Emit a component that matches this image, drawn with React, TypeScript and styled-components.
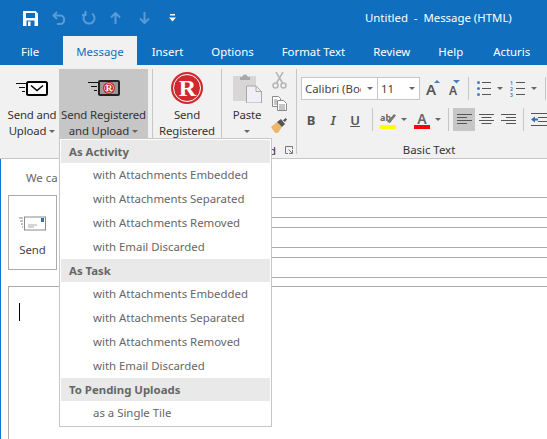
import React from 'react'
import styled, { createGlobalStyle } from 'styled-components'

const BLUE = '#106ebe'
const GREY_ICON = '#666'

const GlobalStyle = createGlobalStyle`
  html, body {
    margin: 0;
    padding: 0;
    background: #fff;
    font-family: "Noto Sans", "Open Sans", sans-serif;
    font-size: 11.4px;
  }
`

const Window = styled.div`
  position: relative;
  width: 547px;
  height: 439px;
  overflow: hidden;
  display: flex;
  flex-direction: column;
  background: #fff;
`

const TitleBar = styled.div`
  height: 36px;
  background: ${BLUE};
  display: flex;
  align-items: center;
`

const QuickButton = styled.span<{ $left: number; $w: number }>`
  display: flex;
  justify-content: center;
  margin-left: ${p => p.$left}px;
  width: ${p => p.$w}px;
`

const Title = styled.div`
  margin: -2px 0 0 189px;
  color: #fff;
  white-space: pre;
`

const Tabs = styled.div`
  height: 29px;
  background: ${BLUE};
  display: flex;
  padding-left: 7px;
`

const Tab = styled.div<{ $active?: boolean; $left?: number }>`
  display: flex;
  align-items: center;
  height: 29px;
  padding: 1px ${p => (p.$active ? 13 : 14)}px 0;
  box-sizing: border-box;
  white-space: nowrap;
  margin-left: ${p => p.$left ?? 0}px;
  color: ${p => (p.$active ? BLUE : '#fff')};
  background: ${p => (p.$active ? '#f1f1f1' : 'transparent')};
`

const Ribbon = styled.div`
  height: 89px;
  padding-top: 4px;
  background: #f1f1f1;
  border-bottom: 1px solid #c6c6c6;
  display: flex;
  color: #333;
  overflow: hidden;
`

const LargeButton = styled.div<{ $w: number; $active?: boolean; $pad?: number }>`
  width: ${p => p.$w}px;
  height: 71px;
  box-sizing: border-box;
  padding-left: ${p => p.$pad ?? 0}px;
  flex: none;
  background: ${p => (p.$active ? '#c6c6c6' : 'transparent')};
  display: flex;
  flex-direction: column;
  align-items: center;
`

const LargeIcon = styled.div`
  height: 38px;
  display: flex;
  align-items: center;
  justify-content: center;
`

const LargeLabel = styled.div`
  line-height: 16px;
  text-align: center;
  white-space: nowrap;
  letter-spacing: -0.15px;
`

const Caret = styled.span<{ $left?: number }>`
  display: inline-block;
  width: 0;
  height: 0;
  margin-left: ${p => p.$left ?? 3}px;
  vertical-align: middle;
  border-left: 3px solid transparent;
  border-right: 3px solid transparent;
  border-top: 3px solid ${GREY_ICON};
`

const GroupSep = styled.div<{ $left?: number }>`
  width: 1px;
  height: 85px;
  flex: none;
  margin-left: ${p => p.$left ?? 0}px;
  background: #c6c6c6;
`

const Group = styled.div<{ $w: number }>`
  width: ${p => p.$w}px;
  flex: none;
  display: flex;
  flex-direction: column;
`

const GroupTop = styled.div`
  flex: 1;
  display: flex;
`

const GroupFooter = styled.div`
  height: 16px;
  display: flex;
  align-items: center;
  justify-content: flex-end;
  padding-right: 3px;
  color: #333;
`

const Launcher = styled.span`
  display: flex;
  margin-left: 9px;
`

const ToolColumn = styled.div`
  width: 14px;
  display: flex;
  flex-direction: column;
  align-items: center;
  padding-top: 3px;
  gap: 7px;
`

const FontGroup = styled.div`
  width: 264px;
  flex: none;
  display: flex;
  flex-direction: column;
`

const FontRow = styled.div<{ $pad: number; $top: number }>`
  display: flex;
  align-items: center;
  height: 23px;
  padding-left: ${p => p.$pad}px;
  margin-top: ${p => p.$top}px;
`

const Combo = styled.div<{ $w: number }>`
  width: ${p => p.$w}px;
  height: 23px;
  box-sizing: border-box;
  flex: none;
  background: #fff;
  border: 1px solid #c6c6c6;
  display: flex;
  align-items: center;
  padding: 0 4px 0 3px;
  margin-right: -1px;
`

const ComboText = styled.span<{ $w: number }>`
  width: ${p => p.$w}px;
  overflow: hidden;
  white-space: nowrap;
  color: #444;
`

const Tool = styled.div<{ $w: number; $active?: boolean; $left?: number }>`
  width: ${p => p.$w}px;
  height: 23px;
  flex: none;
  margin-left: ${p => p.$left ?? 0}px;
  display: flex;
  align-items: center;
  justify-content: center;
  background: ${p => (p.$active ? '#c6c6c6' : 'transparent')};
`

const RowSep = styled.div<{ $left: number }>`
  width: 1px;
  height: 23px;
  flex: none;
  margin-left: ${p => p.$left}px;
  background: #c6c6c6;
`

const Format = styled.span<{ $b?: boolean; $i?: boolean; $u?: boolean }>`
  font-size: 13px;
  color: #555;
  font-weight: ${p => (p.$b ? 700 : 600)};
  font-style: ${p => (p.$i ? 'italic' : 'normal')};
  text-decoration: ${p => (p.$u ? 'underline' : 'none')};
`

const FontFooter = styled.div`
  margin-top: auto;
  height: 16px;
  line-height: 16px;
  text-align: center;
  color: #333;
`

const Body = styled.div`
  flex: 1;
  min-height: 0;
  display: flex;
  flex-direction: column;
  border-left: 1px solid #0f78d4;
`

const InfoBar = styled.div`
  height: 36px;
  display: flex;
  align-items: center;
  padding-left: 25px;
  color: #666;
`

const Compose = styled.div`
  height: 91px;
  display: flex;
  padding-left: 7px;
`

const SendButton = styled.div`
  width: 49px;
  height: 75px;
  box-sizing: border-box;
  border: 1px solid #ababab;
  display: flex;
  flex-direction: column;
  align-items: center;
  color: #444;
`

const SendIcon = styled.div`
  height: 35px;
  display: flex;
  align-items: flex-end;
`

const SendLabel = styled.div`
  line-height: 18px;
  margin-top: 10px;
`

const Fields = styled.div`
  flex: 1;
  margin-left: 5px;
  padding-top: 2px;
  display: flex;
  flex-direction: column;
  gap: 9px;
`

const Field = styled.div`
  height: 19px;
  border-top: 1px solid #ababab;
  border-bottom: 1px solid #ababab;
`

const Editor = styled.div`
  flex: 1;
  margin: 0 -2px -2px 7px;
  border: 1px solid #ababab;
  padding: 16px 10px;
`

const Cursor = styled.div`
  width: 1px;
  height: 18px;
  background: #000;
`

const Menu = styled.div`
  position: absolute;
  left: 59px;
  top: 138px;
  width: 213px;
  height: 289px;
  box-sizing: border-box;
  padding: 1px;
  background: #fff;
  border: 1px solid #c6c6c6;
`

const MenuHeader = styled.div`
  height: 23px;
  box-sizing: border-box;
  padding: 0 0 1px 8px;
  display: flex;
  align-items: center;
  background: #e9e9e9;
  color: #666;
  font-weight: 700;
`

const MenuItem = styled.div`
  height: 24px;
  box-sizing: border-box;
  padding: 0 0 2px 32px;
  display: flex;
  align-items: center;
  color: #666;
`

const Lines = () => (
  <g stroke="#111" strokeWidth="1">
    <path d="M0 2.500h10M3 6.500h6M6 10.500h3" />
  </g>
)

const SaveIcon = () => (
  <svg width="15" height="15" viewBox="0 0 15 15">
    <path d="M0 0h12.500L15 2.500V15H0z" fill="#fff" />
    <rect x="3" y="2" width="9" height="5" fill={BLUE} />
    <rect x="3.500" y="9.500" width="8" height="5.500" fill={BLUE} />
    <rect x="5" y="10.500" width="2.500" height="4.500" fill="#fff" />
  </svg>
)

const UndoIcon = () => (
  <svg width="15" height="14" viewBox="0 0 15 14" fill="none" stroke="#5b9bd5" strokeWidth="2">
    <path d="M5 1 1.500 4.500 5 8" />
    <path d="M2 4.500h6.500a4.300 4.300 0 0 1 0 8.500H5" />
  </svg>
)

const RedoIcon = () => (
  <svg width="14" height="14" viewBox="0 0 14 14" fill="none" stroke="#5b9bd5" strokeWidth="2">
    <path d="M4 2.500a5.500 5.500 0 1 0 6 0" />
    <path d="M3.500 0v4h-3.500" />
  </svg>
)

const ArrowIcon = ({ down }: { down?: boolean }) => (
  <svg width="11" height="12" viewBox="0 0 11 12" fill="none" stroke="#5b9bd5" strokeWidth="2">
    <g transform={down ? 'rotate(180 5.500 6)' : undefined}>
      <path d="M1 5.500 5.500 1 10 5.500M5.500 1v11" />
    </g>
  </svg>
)

const CustomizeIcon = () => (
  <svg width="7" height="8" viewBox="0 0 7 8">
    <path d="M1 0h5v1.500H1z" fill="#fff" />
    <path d="M0 3.500h7L3.500 7.500z" fill="#fff" />
  </svg>
)

const UploadIcon = () => (
  <svg width="32" height="15" viewBox="0 0 32 15">
    <Lines />
    <rect x="11" y="1" width="20" height="13" rx="1.500" fill="#fff" stroke="#000" strokeWidth="2" />
    <path d="M15 4.500 21 9.500 27 4.500" fill="none" stroke="#000" strokeWidth="1.500" />
  </svg>
)

const RegisteredUploadIcon = () => (
  <svg width="32" height="16" viewBox="0 0 32 16">
    <Lines />
    <rect x="11" y="1" width="20" height="14" rx="1" fill="#999" stroke="#222" strokeWidth="2" />
    <circle cx="21" cy="8" r="6" fill="#c8262c" />
    <circle cx="21" cy="8" r="4.500" fill="none" stroke="#fff" strokeWidth="0.600" />
    <text x="21" y="11" fontSize="9" fontWeight="700" textAnchor="middle" fill="#fff" fontFamily="Liberation Serif, serif">R</text>
  </svg>
)

const RegisteredIcon = () => (
  <svg width="32" height="32" viewBox="0 0 32 32">
    <circle cx="16" cy="16" r="16" fill="#cf2a30" />
    <circle cx="16" cy="16" r="13.500" fill="none" stroke="#fff" strokeWidth="1" />
    <text x="16.500" y="24" fontSize="24" fontWeight="700" textAnchor="middle" fill="#fff" fontFamily="Liberation Serif, serif">R</text>
  </svg>
)

const PasteIcon = () => (
  <svg width="29" height="30" viewBox="0 0 29 30">
    <rect x="0" y="3" width="23" height="25" rx="1" fill="#d8d6d7" />
    <path d="M7 4h2.500a2.500 2.500 0 0 1 5 0H17v3H7z" fill="#a9a9a9" />
    <path d="M13.500 13H23l5.500 5.500V30h-15z" fill="#f0eff5" stroke="#a9a9a9" />
    <path d="M23 13v5.500h5.500" fill="none" stroke="#a9a9a9" />
  </svg>
)

const ScissorsIcon = () => (
  <svg width="15" height="17" viewBox="0 0 15 17" fill="none" stroke="#b5b5b5" strokeWidth="1.500">
    <circle cx="3.500" cy="13.500" r="2.500" />
    <circle cx="11.500" cy="13.500" r="2.500" />
    <path d="M4.500 11 11 0M10.500 11 4 0" />
  </svg>
)

const CopyIcon = () => (
  <svg width="15" height="15" viewBox="0 0 15 15" fill="#fff" stroke="#8a8a8a">
    <path d="M.5.500h6l2 2v8h-8z" />
    <path d="M5.500 4.500h6l3 3v7h-9z" />
    <path d="M7 9h6M7 11h6M7 13h6M2 4h3M2 6h3M2 8h3" />
  </svg>
)

const BrushIcon = () => (
  <svg width="16" height="15" viewBox="0 0 16 15">
    <path d="M0 9 6 4l5 5-4 6H4z" fill="#edb668" />
    <path d="M6 4l4-3 4 5-3 3z" fill="#555" />
    <path d="M12 2.500 14.500 0 16 1.500 14 4z" fill="#555" />
  </svg>
)

const LauncherIcon = () => (
  <svg width="8" height="8" viewBox="0 0 8 8" fill="none" stroke="#777">
    <path d="M7.500 3V.500H.500v7H3" />
    <path d="M3.500 3.500 7 7M7.500 4v3.500H4" />
  </svg>
)

const GrowIcon = ({ size, x, caret }: { size: number; x: number; caret: string }) => (
  <svg width="16" height="20" viewBox="0 0 16 20">
    <text x={x} y="15.500" fontSize={size} fontWeight="600" fill="#555" fontFamily="Noto Sans, sans-serif">A</text>
    <path d={caret} fill="#4a7ebb" />
  </svg>
)

const BulletsIcon = () => (
  <svg width="14" height="15" viewBox="0 0 14 15">
    <circle cx="1.500" cy="1.500" r="1.500" fill="#4a7ebb" />
    <circle cx="1.500" cy="7.500" r="1.500" fill="#4a7ebb" />
    <circle cx="1.500" cy="13.500" r="1.500" fill="#4a7ebb" />
    <path d="M5 1.500h9M5 7.500h9M5 13.500h9" stroke="#555" />
  </svg>
)

const NumbersIcon = () => (
  <svg width="15" height="17" viewBox="0 0 15 17">
    <text x="0" y="5" fontSize="5" fontWeight="700" fill="#4a7ebb" fontFamily="Noto Sans, sans-serif">1</text>
    <text x="0" y="11" fontSize="5" fontWeight="700" fill="#4a7ebb" fontFamily="Noto Sans, sans-serif">2</text>
    <text x="0" y="17" fontSize="5" fontWeight="700" fill="#4a7ebb" fontFamily="Noto Sans, sans-serif">3</text>
    <path d="M6 2.500h9M6 8.500h9M6 14.500h9" stroke="#555" />
  </svg>
)

const HighlightIcon = () => (
  <svg width="16" height="18" viewBox="0 0 16 18">
    <text x="0" y="10" fontSize="9" fontWeight="700" fill="#666" fontFamily="Noto Sans, sans-serif">ab</text>
    <path d="M7 11 14 3l2 1.500L10 12z" fill="#777" />
    <rect x="0" y="14" width="16" height="4" fill="#ffff00" />
  </svg>
)

const FontColorIcon = () => (
  <svg width="16" height="18" viewBox="0 0 16 18">
    <text x="8" y="13" fontSize="14" fontWeight="600" textAnchor="middle" fill="#666" fontFamily="Noto Sans, sans-serif">A</text>
    <rect x="0" y="14" width="16" height="4" fill="#ff0000" />
  </svg>
)

const AlignIcon = ({ rows }: { rows: [number, number][] }) => (
  <svg width="15" height="11" viewBox="0 0 15 11">
    {rows.map(([x, w], i) => (
      <rect key={i} x={x} y={i * 3} width={w} height="1" fill="#555" />
    ))}
  </svg>
)

const OutdentIcon = () => (
  <svg width="17" height="13" viewBox="0 0 17 13">
    <path d="M0 .500h17M7 4.500h10M7 8.500h10M0 12.500h17" stroke="#555" />
    <path d="M0 6.500 4 3.500v2h3v2H4v2z" fill="#2f6fb5" />
  </svg>
)

const SendEnvelopeIcon = () => (
  <svg width="27" height="15" viewBox="0 0 27 15">
    <path d="M0 2h4M1 5h3M2 8h2M3 11h1" stroke="#888" />
    <rect x="5.500" y="1" width="21" height="13" fill="#fff" stroke="#8a8a8a" />
    <rect x="22" y="2" width="3" height="4" fill="#2f6fb5" />
    <path d="M9 9h9M9 11h6" stroke="#aaa" />
  </svg>
)

const sections = [
  {
    title: 'As Activity',
    items: [
      'with Attachments Embedded',
      'with Attachments Separated',
      'with Attachments Removed',
      'with Email Discarded',
    ],
  },
  {
    title: 'As Task',
    items: [
      'with Attachments Embedded',
      'with Attachments Separated',
      'with Attachments Removed',
      'with Email Discarded',
    ],
  },
  { title: 'To Pending Uploads', items: ['as a Single Tile'] },
]

const App: React.FC = () => {
  return (
    <Window>
      <GlobalStyle />
      <TitleBar>
        <QuickButton $left={23} $w={15}><SaveIcon /></QuickButton>
        <QuickButton $left={14} $w={15}><UndoIcon /></QuickButton>
        <QuickButton $left={14} $w={15}><RedoIcon /></QuickButton>
        <QuickButton $left={14} $w={11}><ArrowIcon /></QuickButton>
        <QuickButton $left={18} $w={11}><ArrowIcon down /></QuickButton>
        <QuickButton $left={19} $w={7}><CustomizeIcon /></QuickButton>
        <Title>Untitled  -  Message (HTML)</Title>
      </TitleBar>
      <Tabs>
        <Tab>File</Tab>
        <Tab $active $left={10}>Message</Tab>
        <Tab $left={1}>Insert</Tab>
        <Tab>Options</Tab>
        <Tab>Format Text</Tab>
        <Tab>Review</Tab>
        <Tab>Help</Tab>
        <Tab $left={2}>Acturis</Tab>
      </Tabs>
      <Ribbon>
        <LargeButton $w={59} $pad={5}>
          <LargeIcon><UploadIcon /></LargeIcon>
          <LargeLabel>Send and<br />Upload<Caret /></LargeLabel>
        </LargeButton>
        <LargeButton $w={89} $active>
          <LargeIcon><RegisteredUploadIcon /></LargeIcon>
          <LargeLabel>Send Registered<br />and Upload<Caret /></LargeLabel>
        </LargeButton>
        <GroupSep $left={4} />
        <LargeButton $w={68}>
          <LargeIcon><RegisteredIcon /></LargeIcon>
          <LargeLabel>Send<br />Registered</LargeLabel>
        </LargeButton>
        <GroupSep />
        <Group $w={74}>
          <GroupTop>
            <LargeButton $w={50}>
              <LargeIcon><PasteIcon /></LargeIcon>
              <LargeLabel>Paste<br /><Caret $left={0} /></LargeLabel>
            </LargeButton>
            <ToolColumn>
              <ScissorsIcon />
              <CopyIcon />
              <BrushIcon />
            </ToolColumn>
          </GroupTop>
          <GroupFooter>
            Clipboard
            <Launcher><LauncherIcon /></Launcher>
          </GroupFooter>
        </Group>
        <GroupSep />
        <FontGroup>
          <FontRow $pad={4} $top={8}>
            <Combo $w={77}>
              <ComboText $w={58}>Calibri (Body)</ComboText>
              <Caret $left={6} />
            </Combo>
            <Combo $w={43}>
              <ComboText $w={30}>11</ComboText>
              <Caret $left={0} />
            </Combo>
            <Tool $w={22} $left={2}><GrowIcon size={15} x={2} caret="M10 4h6l-3-3z" /></Tool>
            <Tool $w={22}><GrowIcon size={12} x={3} caret="M7 1h7l-3.500 3.500z" /></Tool>
            <RowSep $left={3} />
            <Tool $w={22} $left={4}><BulletsIcon /></Tool>
            <Tool $w={10}><Caret $left={0} /></Tool>
            <Tool $w={22} $left={1}><NumbersIcon /></Tool>
            <Tool $w={10} $left={1}><Caret $left={0} /></Tool>
            <RowSep $left={6} />
          </FontRow>
          <FontRow $pad={3} $top={8}>
            <Tool $w={22}><Format $b>B</Format></Tool>
            <Tool $w={22}><Format $i>I</Format></Tool>
            <Tool $w={22}><Format $u>U</Format></Tool>
            <RowSep $left={6} />
            <Tool $w={16} $left={7}><HighlightIcon /></Tool>
            <Tool $w={16}><Caret $left={0} /></Tool>
            <Tool $w={16} $left={2}><FontColorIcon /></Tool>
            <Tool $w={16}><Caret $left={0} /></Tool>
            <RowSep $left={2} />
            <Tool $w={22} $left={4} $active><AlignIcon rows={[[0, 15], [0, 10], [0, 15], [0, 10]]} /></Tool>
            <Tool $w={22}><AlignIcon rows={[[0, 15], [2.5, 10], [0, 15], [2.5, 10]]} /></Tool>
            <Tool $w={22}><AlignIcon rows={[[0, 15], [5, 10], [0, 15], [5, 10]]} /></Tool>
            <RowSep $left={4} />
            <Tool $w={17} $left={7}><OutdentIcon /></Tool>
          </FontRow>
          <FontFooter>Basic Text</FontFooter>
        </FontGroup>
      </Ribbon>
      <Body>
        <InfoBar>We ca</InfoBar>
        <Compose>
          <SendButton>
            <SendIcon><SendEnvelopeIcon /></SendIcon>
            <SendLabel>Send</SendLabel>
          </SendButton>
          <Fields>
            <Field />
            <Field />
            <Field />
          </Fields>
        </Compose>
        <Editor><Cursor /></Editor>
      </Body>
      <Menu>
        {sections.map(section => (
          <React.Fragment key={section.title}>
            <MenuHeader>{section.title}</MenuHeader>
            {section.items.map(item => (
              <MenuItem key={item}>{item}</MenuItem>
            ))}
          </React.Fragment>
        ))}
      </Menu>
    </Window>
  )
}

export default App
